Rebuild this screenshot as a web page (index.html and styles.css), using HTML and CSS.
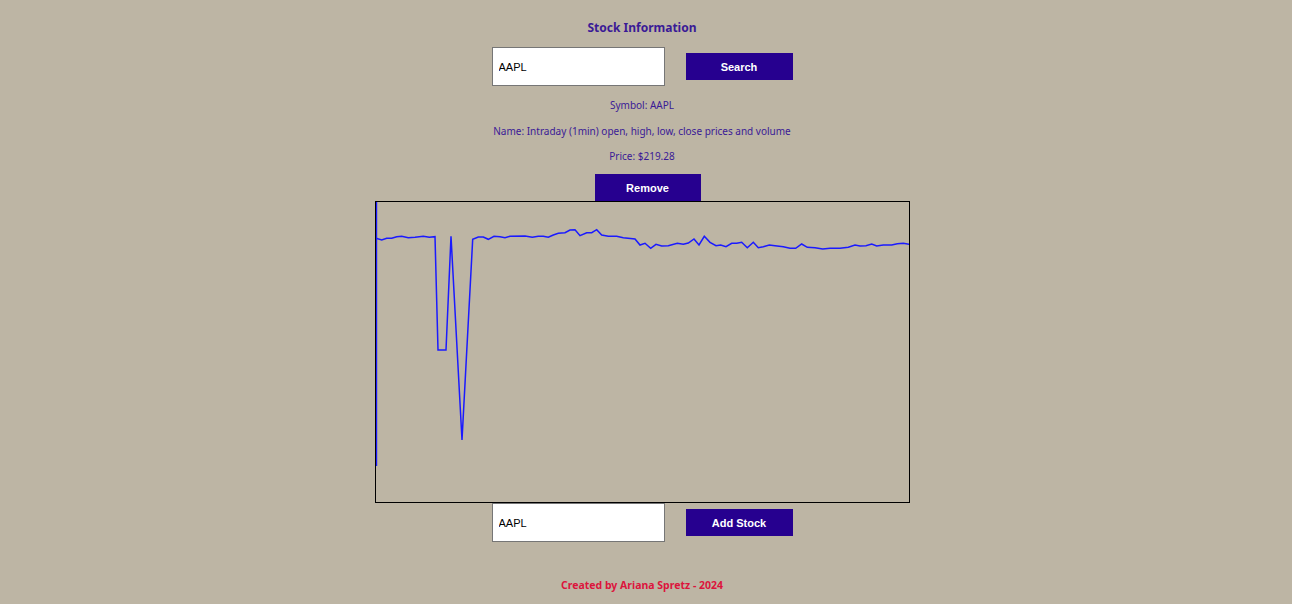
FILE: index.html
```html
<!DOCTYPE html>
<html>
<head>
<meta charset="utf-8">
<link rel="stylesheet" href="styles.css">
</head>
<body>
<div class="page">
  <h1 class="title">Stock Information</h1>
  <div class="row search-row">
    <input class="field" type="text" value="AAPL">
    <button class="btn">Search</button>
  </div>
  <p class="info">Symbol: AAPL</p>
  <p class="info">Name: Intraday (1min) open, high, low, close prices and volume</p>
  <p class="info info-last">Price: $219.28</p>
  <button class="btn btn-remove">Remove</button>
  <div class="chart">
    <svg class="chart-svg" width="533" height="300" viewBox="0 0 533 300">
      <path d="M0.6 264 V0" fill="none" stroke="#1a1aff" stroke-width="1.2"/>
      <polyline fill="none" stroke="#1a1aff" stroke-width="1.5" stroke-linejoin="miter" points="0,36.3 5.7,38 10.7,36.3 15.7,36.3 20.7,34.7 25.7,34.3 32.3,35.7 39,35.3 47.3,34.3 53.3,35.3 59,34.7 62,148 70,148 75,34.3 86,238 96.7,37.3 102.3,35 107.3,35 112.3,37.3 118,34.3 124,34.7 129,35.7 134,34.3 149,34 156.3,35.3 162.3,34.3 167.3,34.3 172.3,35.3 177.3,33 182.3,31.3 189,30.7 194,28 199,27.7 204,33.7 210.7,30.7 215.7,30.7 220.7,27.7 225.7,33 232.3,34.3 240.7,34.3 247.3,35.7 259,37 264,43 269,41.3 274.7,46.3 280,42.3 285.7,44 292.3,43.7 301.3,41.3 307.3,42.3 312.3,41 318,37 323,43 328.3,34.3 334,40.3 340,43.7 344.7,43 350,44.7 355.7,41.3 360.7,41.3 365.7,40.3 371.3,45.7 377.3,40.3 382.3,45.7 387.3,44.7 393.3,43 399,43.7 407.3,44.7 414,46.3 419.7,46.3 425.7,42 431.3,45.3 439,45.7 446.7,47 454,46.3 464,46.3 472.3,45.3 479,43 484,44 490,43.7 495.7,42 500.7,44 507.3,43 515.7,43 521.3,41.7 527.3,41.3 533.3,42.3"/>
    </svg>
  </div>
  <div class="row add-row">
    <input class="field" type="text" value="AAPL">
    <button class="btn">Add Stock</button>
  </div>
  <footer class="footer">Created by Ariana Spretz - 2024</footer>
</div>
</body>
</html>
```

FILE: styles.css
```css
html, body {
  margin: 0;
  padding: 0;
  background: #bdb5a4;
}
body {
  height: 604px;
  overflow: hidden;
}
.page {
  width: 1284px;
  display: flex;
  flex-direction: column;
  align-items: center;
  font-family: "Noto Sans", "Open Sans", sans-serif;
}
.title {
  margin: 20px 0 0;
  font-size: 12px;
  line-height: 16px;
  font-weight: 700;
  color: #3a1a96;
}
.row {
  display: flex;
  align-items: center;
  gap: 21px;
}
.search-row {
  margin-top: 11px;
}
.field {
  box-sizing: border-box;
  width: 173px;
  height: 39px;
  margin: 0;
  padding: 0 6px;
  border: 1px solid #767676;
  background: #fff;
  font-family: "Liberation Sans", Arial, sans-serif;
  font-size: 11px;
  color: #000;
  outline: none;
}
.btn {
  box-sizing: border-box;
  width: 107px;
  height: 27px;
  margin: 0;
  padding: 0;
  border: none;
  background: #26008f;
  color: #fff;
  font-family: "Liberation Sans", Arial, sans-serif;
  font-size: 11px;
  font-weight: 700;
}
.info {
  margin: 12px 0 0;
  font-size: 10px;
  line-height: 14px;
  color: #3a1a96;
}
.info-last {
  margin-top: 11px;
}
.btn-remove {
  width: 106px;
  margin-top: 11px;
  margin-left: 11px;
}
.chart {
  box-sizing: border-box;
  width: 535px;
  height: 302px;
  border: 1px solid #000;
}
.chart-svg {
  display: block;
  overflow: hidden;
}
.footer {
  margin-top: 35px;
  font-size: 10.5px;
  line-height: 16px;
  font-weight: 700;
  color: #dc143c;
}
```
